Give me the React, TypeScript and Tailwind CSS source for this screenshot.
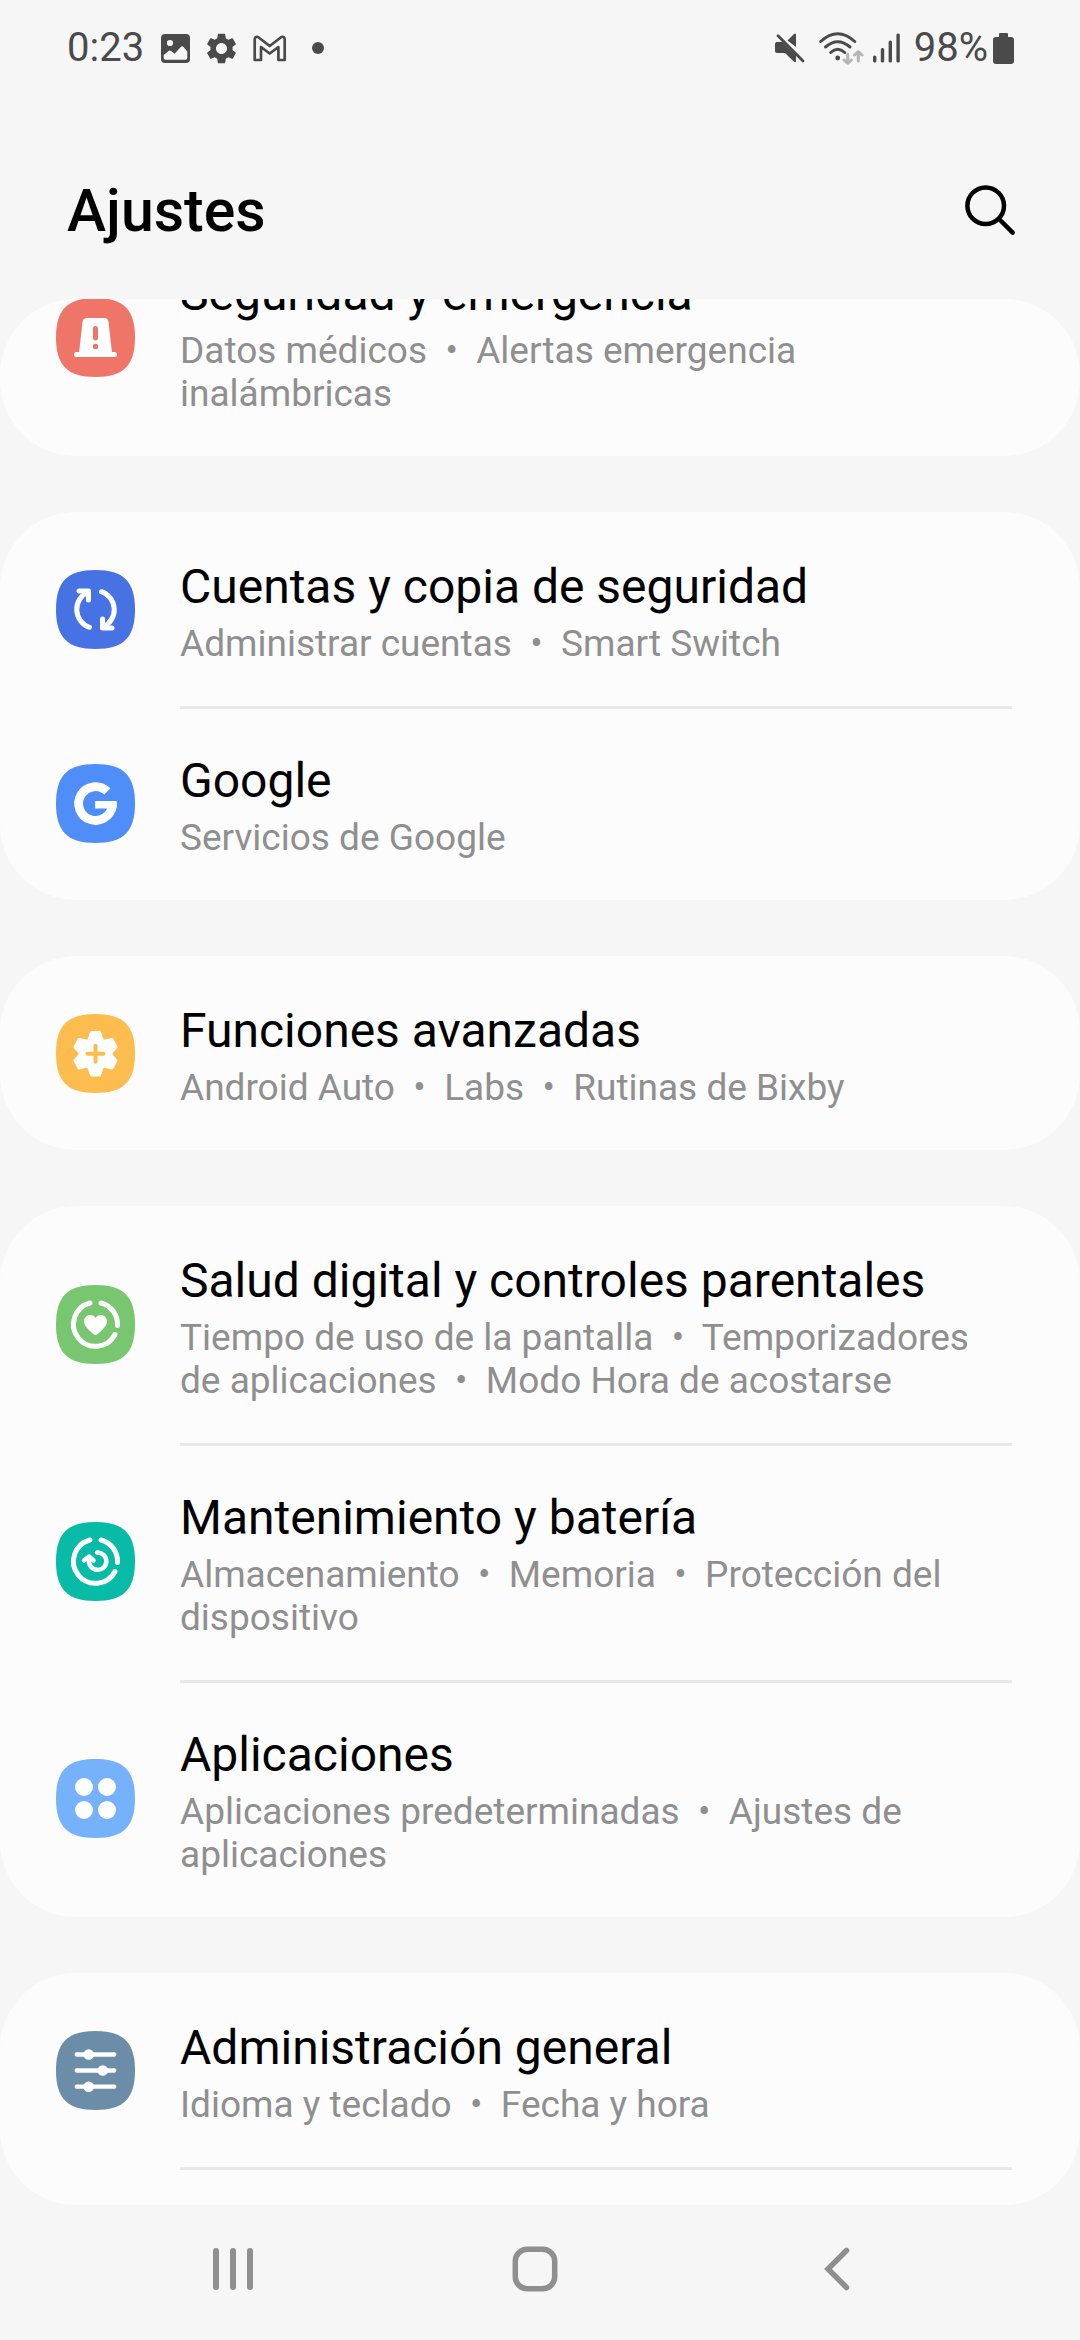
import type { ReactNode } from 'react'
import { MdSettings } from 'react-icons/md'

interface SettingsItem {
  id:      string
  title:   string
  details: string[]
  color:   string
  glyph:   ReactNode
}

const RING = (
  <g fill="none" stroke="#fff" strokeWidth="5" strokeLinecap="round">
    <path d="M 34 18 A 22 22 0 1 0 59 49.5" />
    <path d="M 45 18 A 22 22 0 0 1 61.5 40.5" />
  </g>
)

const GROUPS: SettingsItem[][] = [
  [
    {
      id: 'emergency',
      title: 'Seguridad y emergencia',
      details: ['Datos médicos', 'Alertas emergencia inalámbricas'],
      color: '#ee7568',
      glyph: (
        <>
          <path d="M 26.5 24 Q 27 20 31 20 H 48 Q 52 20 52.5 24 L 56 55 H 23 Z" fill="#fff" />
          <path d="M 20.5 56.5 H 58.5" stroke="#fff" strokeWidth="5" strokeLinecap="round" />
          <path d="M 39.5 30.5 V 40" stroke="#ee7568" strokeWidth="5" strokeLinecap="round" />
          <circle cx="39.5" cy="48.5" r="2.7" fill="#ee7568" />
        </>
      ),
    },
  ],
  [
    {
      id: 'accounts',
      title: 'Cuentas y copia de seguridad',
      details: ['Administrar cuentas', 'Smart Switch'],
      color: '#4772e3',
      glyph: (
        <g fill="none" stroke="#fff" strokeWidth="5" strokeLinecap="round" strokeLinejoin="round">
          <path d="M 32 22 A 19 19 0 0 0 33.5 57.3" />
          <path d="M 23 21 H 32.5 V 30" />
          <path d="M 47 57 A 19 19 0 0 0 45.5 21.7" />
          <path d="M 56 58 H 46.5 V 49" />
        </g>
      ),
    },
    {
      id: 'google',
      title: 'Google',
      details: ['Servicios de Google'],
      color: '#4f8ef9',
      glyph: (
        <>
          <path d="M 51.3 27.4 A 16.9 16.9 0 1 0 56.4 40.7" fill="none" stroke="#fff" strokeWidth="8.8" />
          <path d="M 39.2 37 H 60.6 Q 61.2 41 60.4 44.5 H 39.2 Z" fill="#fff" />
        </>
      ),
    },
  ],
  [
    {
      id: 'advanced',
      title: 'Funciones avanzadas',
      details: ['Android Auto', 'Labs', 'Rutinas de Bixby'],
      color: '#fdbd4e',
      glyph: (
        <>
          <path
            d="M 35.5 18.5 H 43.5 L 46 26 Q 47 27.5 49 27 L 56 25.5 L 60 33 L 55.5 38 Q 54.5 39.6 55.5 41.5 L 60 46.5 L 56 54 L 49 52.3 Q 47 52 46 53.5 L 43.5 61 H 35.5 L 33 53.5 Q 32 52 30 52.3 L 23 54 L 19 46.5 L 23.5 41.5 Q 24.5 39.6 23.5 38 L 19 33 L 23 25.5 L 30 27 Q 32 27.5 33 26 Z"
            fill="#fff"
            stroke="#fff"
            strokeWidth="3"
            strokeLinejoin="round"
          />
          <path d="M 31.5 39.7 H 47.5 M 39.5 31.7 V 47.7" stroke="#fdbd4e" strokeWidth="4" strokeLinecap="round" />
        </>
      ),
    },
  ],
  [
    {
      id: 'wellbeing',
      title: 'Salud digital y controles parentales',
      details: ['Tiempo de uso de la pantalla', 'Temporizadores de aplicaciones', 'Modo Hora de acostarse'],
      color: '#79c670',
      glyph: (
        <>
          {RING}
          <path
            d="M 39.5 50 C 38 50 28 42 28 36.5 C 28 32.5 31 30 34 30 C 36.5 30 38.5 31 39.5 33.3 C 40.5 31 42.5 30 45 30 C 48 30 51 32.5 51 36.5 C 51 42 41 50 39.5 50 Z"
            fill="#fff"
          />
        </>
      ),
    },
    {
      id: 'care',
      title: 'Mantenimiento y batería',
      details: ['Almacenamiento', 'Memoria', 'Protección del dispositivo'],
      color: '#07bba6',
      glyph: (
        <>
          {RING}
          <g fill="none" stroke="#fff" strokeWidth="4.5" strokeLinecap="round" strokeLinejoin="round">
            <path d="M 41 30.5 A 8.7 8.7 0 1 1 33 38 V 35" />
            <path d="M 28 38.5 L 33 34.5 L 37.5 38.5" />
          </g>
        </>
      ),
    },
    {
      id: 'apps',
      title: 'Aplicaciones',
      details: ['Aplicaciones predeterminadas', 'Ajustes de aplicaciones'],
      color: '#76b1fb',
      glyph: (
        <g fill="#fff">
          <circle cx="28" cy="28" r="9" />
          <circle cx="51" cy="28" r="9" />
          <circle cx="28" cy="51" r="9" />
          <circle cx="51" cy="51" r="9" />
        </g>
      ),
    },
  ],
  [
    {
      id: 'general',
      title: 'Administración general',
      details: ['Idioma y teclado', 'Fecha y hora'],
      color: '#6b8da7',
      glyph: (
        <>
          <path
            d="M 20.7 23.5 H 58.3 M 20.7 39.5 H 58.3 M 20.7 55.7 H 58.3"
            stroke="#fff"
            strokeWidth="4.3"
            strokeLinecap="round"
          />
          <g fill="#fff">
            <circle cx="32.7" cy="23.5" r="5.3" />
            <circle cx="46.8" cy="39.5" r="5.3" />
            <circle cx="32.7" cy="55.7" r="5.3" />
          </g>
        </>
      ),
    },
  ],
]

function StatusBar() {
  return (
    <div className="flex h-24 items-center justify-between pl-[67px] pr-[66px] text-[40px] leading-[48px] text-[#4a4a4a]">
      <div className="flex items-center gap-[17px]">
        <span>0:23</span>
        <svg width="29" height="29" viewBox="0 0 29 29" aria-hidden="true">
          <rect width="29" height="29" rx="4" fill="currentColor" />
          <circle cx="9" cy="9" r="3.1" fill="#f6f6f6" />
          <path
            d="M 2.7 21 L 8 16.7 Q 9 16 10 17 L 13.5 19.7 L 20 12.7 Q 21.3 11.8 22.5 13 L 26.3 17.5 V 24 Q 26.3 25.8 24.5 25.8 H 4.5 Q 2.7 25.8 2.7 24 Z"
            fill="#f6f6f6"
          />
        </svg>
        <MdSettings size={37} className="-mx-1" aria-hidden="true" />
        <svg width="34" height="27" viewBox="0 0 34 27" fill="none" stroke="currentColor" strokeWidth="2.7" strokeLinejoin="round" aria-hidden="true">
          <path d="M 1.7 25 V 4.5 Q 2 1 5 2 L 16.7 11 L 28.4 2 Q 31.4 1 31.7 4.5 V 25 H 25.4 V 12 L 16.7 18.5 L 8 12 V 25 Z" />
        </svg>
        <span className="ml-2 h-3 w-3 rounded-full bg-[#4a4a4a]" />
      </div>
      <div className="flex items-center">
        <svg width="30" height="30" viewBox="0 0 30 30" fill="currentColor" aria-hidden="true">
          <path d="M 2 9 H 7.5 L 21 22.5 V 28 Q 21 30 19 28.8 L 10 20 H 2 Q 0 20 0 18 V 11 Q 0 9 2 9 Z" />
          <path d="M 21 1.5 V 14 L 12.5 7.5 L 18.5 1.5 Q 21 -0.5 21 1.5 Z" />
          <path d="M 3 2.7 L 28 28" stroke="currentColor" strokeWidth="2.8" strokeLinecap="round" />
        </svg>
        <svg className="ml-[14px]" width="45" height="33" viewBox="0 0 45 33" fill="none" strokeWidth="3" strokeLinecap="round" strokeLinejoin="round" aria-hidden="true">
          <g stroke="currentColor">
            <path d="M 1.7 9.5 Q 18.7 -6 35.7 9.5" />
            <path d="M 6.5 15 Q 18.7 4.5 31 15" />
            <path d="M 11.7 20.5 Q 18.7 14 25.7 20.5" />
          </g>
          <circle cx="18.7" cy="26" r="2.4" fill="currentColor" />
          <g stroke="#b5b5b5">
            <path d="M 28.7 22 V 31 M 25 28 L 28.7 31.3 L 32.4 28" />
            <path d="M 39.3 29 V 20 M 35.6 23 L 39.3 19.7 L 43 23" />
          </g>
        </svg>
        <svg className="ml-[9px]" width="27" height="30" viewBox="0 0 27 30" fill="currentColor" aria-hidden="true">
          <rect x="0" y="22.5" width="3.4" height="7" rx="1.5" />
          <rect x="7.8" y="15" width="3.4" height="14.5" rx="1.5" />
          <rect x="15.6" y="7.5" width="3.4" height="22" rx="1.5" />
          <rect x="23.4" y="0.5" width="3.4" height="29" rx="1.5" />
        </svg>
        <span className="ml-[14px]">98%</span>
        <svg className="ml-[5px]" width="21" height="31" viewBox="0 0 21 31" fill="currentColor" aria-hidden="true">
          <rect x="6" y="0" width="9" height="8" rx="1" />
          <rect x="0" y="4" width="21" height="27" rx="3" />
        </svg>
      </div>
    </div>
  )
}

function SettingsRow({ item, divided }: { item: SettingsItem; divided: boolean }) {
  return (
    <li>
      {divided && <div className="-mb-[3px] ml-[180px] mr-[68px] h-[3px] bg-[#e8e8e8]" />}
      <a href={`#${item.id}`} className="flex items-center gap-[45px] py-[41px] pl-14 pr-[68px]">
        <svg className="shrink-0" width="79" height="79" viewBox="0 0 79 79" aria-hidden="true">
          <path
            d="M 39.5 0 C 67.5 0 79 11.5 79 39.5 C 79 67.5 67.5 79 39.5 79 C 11.5 79 0 67.5 0 39.5 C 0 11.5 11.5 0 39.5 0 Z"
            fill={item.color}
          />
          {item.glyph}
        </svg>
        <div className="flex min-w-0 flex-1 flex-col gap-[2px]">
          <h2 className="text-[48px] leading-[67px] text-black">{item.title}</h2>
          <p className="text-[37px] leading-[43px] text-[#8f8f8f]">
            {item.details.join('\u00a0\u00a0•\u00a0 ')}
          </p>
        </div>
      </a>
    </li>
  )
}

function NavigationBar() {
  return (
    <nav aria-label="Sistema" className="grid h-[135px] shrink-0 grid-cols-3 pb-[7px] pl-[82px] pr-[92px] text-[#8f8f8f]">
      <button type="button" aria-label="Recientes" className="flex items-center justify-center">
        <svg width="40" height="44" viewBox="0 0 40 44" stroke="currentColor" strokeWidth="6" strokeLinecap="round">
          <path d="M 3 4 V 40 M 20 4 V 40 M 37 4 V 40" />
        </svg>
      </button>
      <button type="button" aria-label="Inicio" className="flex items-center justify-center">
        <svg width="46" height="46" viewBox="0 0 46 46" fill="none" stroke="currentColor" strokeWidth="5.5">
          <rect x="3.3" y="3.3" width="39.4" height="39.4" rx="12" />
        </svg>
      </button>
      <button type="button" aria-label="Atrás" className="flex items-center justify-center">
        <svg width="26" height="44" viewBox="0 0 26 44" fill="none" stroke="currentColor" strokeWidth="5.5" strokeLinecap="round">
          <path d="M 22.5 3.5 L 4 22 L 22.5 40.5" />
        </svg>
      </button>
    </nav>
  )
}

export default function App() {
  return (
    <div className="flex h-screen flex-col bg-[#f6f6f6] font-[Roboto,sans-serif]">
      <StatusBar />
      <header className="flex h-[203px] shrink-0 items-center justify-between pt-[26px] pl-[67px] pr-[64px]">
        <h1 className="text-[59px] font-medium leading-[70px] text-black">Ajustes</h1>
        <button type="button" aria-label="Buscar">
          <svg width="51" height="51" viewBox="0 0 51 51" fill="none" stroke="#000" strokeWidth="4.5" strokeLinecap="round">
            <circle cx="20.7" cy="20.7" r="18.3" />
            <path d="M 34.5 34.5 L 47.7 47.7" />
          </svg>
        </button>
      </header>
      <main className="flex min-h-0 flex-1 flex-col overflow-hidden rounded-[76px]">
        {/* list is scrolled part of the way down */}
        <div className="-mt-20 flex flex-1 flex-col gap-14">
          {GROUPS.map((group, g) => (
            <ul key={group[0].id} className="rounded-[76px] bg-[#fcfcfc] last:grow last:rounded-b-none">
              {group.map((item, i) => (
                <SettingsRow key={item.id} item={item} divided={i > 0} />
              ))}
              {g === GROUPS.length - 1 && (
                <li aria-hidden="true" className="ml-[180px] mr-[68px] h-[3px] bg-[#e8e8e8]" />
              )}
            </ul>
          ))}
        </div>
      </main>
      <NavigationBar />
    </div>
  )
}
